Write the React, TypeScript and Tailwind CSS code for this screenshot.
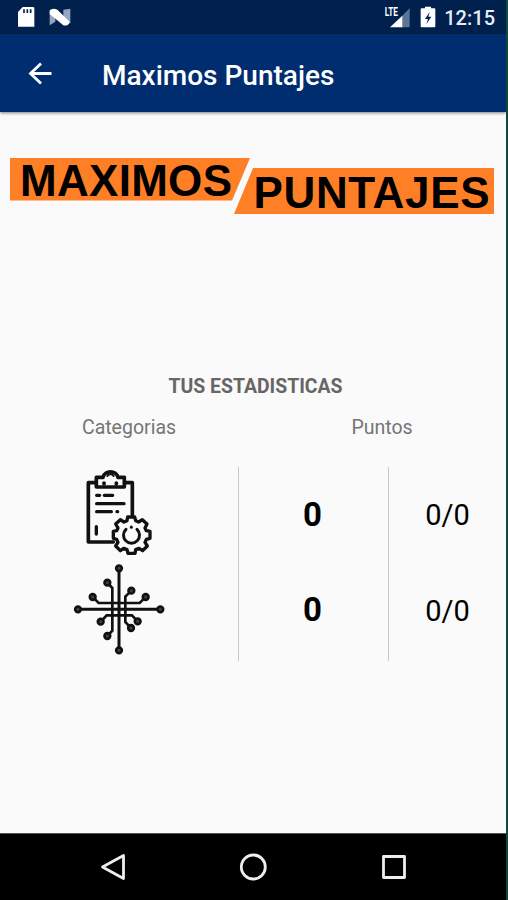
import type { ReactNode } from "react";

const stats = [
  { name: "Conocimientos", points: "0", ratio: "0/0", icon: <ClipboardIcon /> },
  { name: "Tecnologia", points: "0", ratio: "0/0", icon: <CircuitIcon /> },
];

function ClipboardIcon() {
  return (
    <svg width="120" height="100" viewBox="0 0 360 300" fill="none" stroke="#111" strokeWidth="11" strokeLinecap="round" strokeLinejoin="round">
      <path d="M107 68H85V246H160M194 68H217V166" />
      <path d="M109 81V52H129C133 30 170 30 174 52H193V81Z" />
      <path d="M142 48C145 41 158 41 161 48" strokeWidth="6" />
      <path d="M132 69V72M169 69V72" />
      <path d="M110 106H119M133 106H158M110 131H192M110 155H154M171 155H173M109 200V222" strokeWidth="10" />
      <path
        d="M201 182L203 171H224L227 182L236 186L247 179L261 192L255 204L259 212L270 214V235L259 238L255 247L262 258L248 272L237 265L227 269L225 280H204L201 269L191 265L181 272L167 258L174 247L170 238L160 235V214L170 212L174 204L167 192L181 179L192 186Z"
        strokeWidth="10"
      />
      <path d="M198 208A24 24 0 1 0 231 208" strokeWidth="9" />
      <path d="M214 201V202" strokeWidth="9" />
    </svg>
  );
}

const nodes = [
  [177, 25],
  [142, 68],
  [98, 111],
  [214, 92],
  [257, 111],
  [54, 148],
  [301, 148],
  [122, 185],
  [233, 184],
  [142, 228],
  [213, 204],
  [177, 271],
];

function CircuitIcon() {
  return (
    <svg width="120" height="100" viewBox="0 0 360 300" fill="none" stroke="#111" strokeWidth="8">
      <path d="M177 30V266M59 148H296" strokeWidth="9" />
      <path d="M146 72L157 84V212L146 224M209 97L196 110V186L209 200" />
      <path d="M103 116L116 129H239L252 116M127 180L140 166H216L228 179" />
      {nodes.map(([cx, cy]) => (
        <circle key={`${cx}-${cy}`} cx={cx} cy={cy} r="8.500" fill="#444" strokeWidth="8" />
      ))}
    </svg>
  );
}

function StatusBar() {
  return (
    <div className="flex h-[34px] items-start justify-between bg-[#00204d]">
      <svg width="80" height="34" viewBox="0 0 240 102">
        <path d="M68 21H99Q103 21 103 25V80H54V36Z" fill="#fff" />
        <path d="M72 28V39M82 28V39M92 28V39" stroke="#00204d" strokeWidth="5" />
        <path d="M149 35L166 48V65L149 76ZM190 29L211 26V71L190 57Z" fill="#94a6bf" />
        <path d="M149 31Q158 23 172 29L209 65Q205 80 190 76L149 42Z" fill="#fff" />
      </svg>
      <div className="flex">
        <svg width="62" height="34" viewBox="0 0 186 102">
          <path d="M83 25V82H59V49Z" fill="#5c7495" />
          <path d="M61 47V82H24Z" fill="#fff" />
          <text x="8" y="49" fill="#fff" fontFamily="Roboto, sans-serif" fontWeight="700" fontSize="36" textLength="40" lengthAdjust="spacingAndGlyphs">
            LTE
          </text>
          <path d="M129 25V20H147V25H157Q160 25 160 28V79Q160 82 157 82H119Q116 82 116 79V28Q116 25 119 25Z" fill="#fff" />
          <path d="M143 36L129 57H138L133 73L148 50H139Z" fill="#00204d" />
        </svg>
        <span className="mr-[11px] mt-1.5 w-[51px] whitespace-nowrap text-right text-xl leading-6 font-medium text-[#e8edf3]">12:15</span>
      </div>
    </div>
  );
}

function AppBar() {
  return (
    <header className="relative flex h-[78px] items-center bg-[#002d70] shadow-[0_1px_3px_rgba(0,0,0,0.5)]">
      <svg className="ml-[27px] mt-px" width="26" height="26" viewBox="0 0 26 26" fill="none" stroke="#fff" strokeWidth="2.800">
        <path d="M24.500 12.500H3.500M14 2.500L3.500 12.500L14 22.500" />
      </svg>
      <h1 className="ml-[49px] mt-[5px] text-[28px] leading-8 font-medium whitespace-nowrap text-white">Maximos Puntajes</h1>
    </header>
  );
}

function Banner() {
  return (
    <svg className="block" width="506" height="80" viewBox="0 0 506 80" fontFamily="'Liberation Sans', Arial, sans-serif" fontWeight="700" fontSize="44">
      <path d="M10 13H250L232 55.500H10Z" fill="#ff7f27" />
      <path d="M253 23H494V69H234Z" fill="#ff7f27" />
      <text x="20" y="50.500" textLength="212" lengthAdjust="spacing">
        MAXIMOS
      </text>
      <text x="253.500" y="62.500" textLength="236" lengthAdjust="spacing">
        PUNTAJES
      </text>
    </svg>
  );
}

function Column({ className, children }: { className: string; children: ReactNode }) {
  return <div className={`grid grid-rows-2 items-center justify-items-center ${className}`}>{children}</div>;
}

function NavBar() {
  return (
    <nav className="h-[67px] border-t border-[#555] bg-black">
      <svg width="506" height="66" viewBox="0 0 506 66" fill="none" stroke="#eee" strokeWidth="2.800" strokeLinejoin="round">
        <path d="M123.500 21.500V44.500L102.500 33Z" />
        <circle cx="253.300" cy="33" r="12" />
        <rect x="383.500" y="22.500" width="21" height="21" />
      </svg>
    </nav>
  );
}

export default function App() {
  return (
    <div className="h-[900px] w-[508px] bg-[#12483b] pr-[2px] font-['Roboto',sans-serif]">
      <div className="flex h-full flex-col overflow-hidden bg-[#fafafa]">
        <StatusBar />
        <AppBar />
        <main className="flex-1 pt-[33px]">
          <Banner />
          <h2 className="mt-[150px] pl-[5px] text-center text-[19.400px] leading-6 font-bold text-[#666]">TUS ESTADISTICAS</h2>
          <div className="mt-[17px] flex text-[19.500px] leading-6 text-[#757575]">
            <span className="w-[258px] text-center">Categorias</span>
            <span className="flex-1 text-center">Puntos</span>
          </div>
          <div className="mt-[27px] flex h-[194px] text-black">
            <div className="-mt-[7px] flex w-[238px] flex-col pl-[60px]">
              {stats.map((s) => (
                <div key={s.name} className="h-[100px]">
                  {s.icon}
                </div>
              ))}
            </div>
            <Column className="w-[150px] border-l border-[#c8c8c8] pr-0.5 pb-[4px] text-[33px] font-bold">
              {stats.map((s) => (
                <span key={s.name}>{s.points}</span>
              ))}
            </Column>
            <Column className="flex-1 border-l border-[#c8c8c8] pb-px text-[29px]">
              {stats.map((s) => (
                <span key={s.name}>{s.ratio}</span>
              ))}
            </Column>
          </div>
        </main>
        <NavBar />
      </div>
    </div>
  );
}
